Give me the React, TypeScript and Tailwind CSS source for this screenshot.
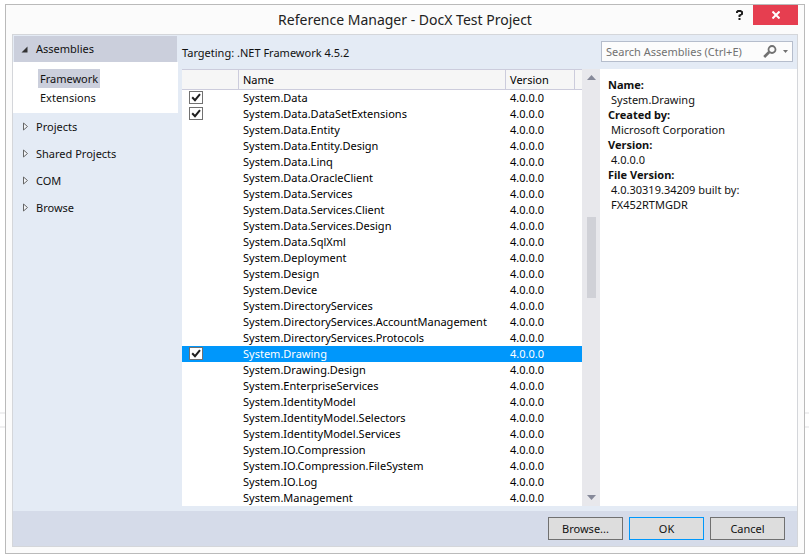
import { useState } from "react";

const assemblies = [
  "System.Data",
  "System.Data.DataSetExtensions",
  "System.Data.Entity",
  "System.Data.Entity.Design",
  "System.Data.Linq",
  "System.Data.OracleClient",
  "System.Data.Services",
  "System.Data.Services.Client",
  "System.Data.Services.Design",
  "System.Data.SqlXml",
  "System.Deployment",
  "System.Design",
  "System.Device",
  "System.DirectoryServices",
  "System.DirectoryServices.AccountManagement",
  "System.DirectoryServices.Protocols",
  "System.Drawing",
  "System.Drawing.Design",
  "System.EnterpriseServices",
  "System.IdentityModel",
  "System.IdentityModel.Selectors",
  "System.IdentityModel.Services",
  "System.IO.Compression",
  "System.IO.Compression.FileSystem",
  "System.IO.Log",
  "System.Management",
];

const details = [
  ["Name:", "System.Drawing"],
  ["Created by:", "Microsoft Corporation"],
  ["Version:", "4.0.0.0"],
  ["File Version:", "4.0.30319.34209 built by: FX452RTMGDR"],
];

function TitleBar() {
  return (
    <header className="grid h-[29px] grid-cols-[1fr_auto_1fr] items-start">
      <span />
      <h1 className="text-[14px] leading-[29px] text-[#222]">Reference Manager - DocX Test Project</h1>
      <div className="flex justify-end">
        <button aria-label="Help" className="flex h-5 w-7 items-center justify-center">
          <svg width="7" height="10" viewBox="0 0 7 10" fill="none" stroke="#1e1e1e" strokeWidth="2">
            <path d="M1 3V2L2 1h2.5L6 2v2L3.5 5.5V7M2.5 9h2" />
          </svg>
        </button>
        <button aria-label="Close" className="flex h-5 w-[45px] items-center justify-center bg-[#e63e50]">
          <svg width="8" height="8" viewBox="0 0 8 8" stroke="#fff" strokeWidth="2">
            <path d="M.5.5l7 7M7.5.5l-7 7" />
          </svg>
        </button>
      </div>
    </header>
  );
}

function Sidebar() {
  return (
    <nav className="flex w-[169px] shrink-0 flex-col pt-px pr-1">
      <button className="mx-px flex h-[26px] items-center bg-[#cbcfdc] pl-[7px] text-left">
        <svg width="7" height="7" viewBox="0 0 7 7" className="mr-2">
          <path d="M6.5.5v6h-6z" fill="#333" />
        </svg>
        Assemblies
      </button>
      <div className="flex h-[51px] flex-col items-start bg-white pt-[7px] pl-[25px]">
        <button className="h-[19px] bg-[#cbcfdc] px-[2px]">Framework</button>
        <button className="h-[19px] px-[2px]">Extensions</button>
      </div>
      {["Projects", "Shared Projects", "COM", "Browse"].map((label) => (
        <button key={label} className="flex h-[27px] items-center pl-2.5 text-left">
          <svg width="5" height="9" viewBox="0 0 5 9" className="mr-2">
            <path d="M.5 1v7L4.5 4.5z" fill="#f4f6fa" stroke="#666" />
          </svg>
          {label}
        </button>
      ))}
    </nav>
  );
}

function ScrollBar() {
  return (
    <div className="flex w-[18px] shrink-0 flex-col items-center bg-[#e8e8ec]">
      <button aria-label="Scroll up" className="flex h-[17px] w-full items-center justify-center">
        <svg width="9" height="5" viewBox="0 0 9 5">
          <path d="M0 5l4.5-5L9 5z" fill="#868999" />
        </svg>
      </button>
      <div className="grow-[131]" />
      <div className="h-[81px] w-[9px] bg-[#d0d1d7]" />
      <div className="grow-[191]" />
      <button aria-label="Scroll down" className="flex h-[17px] w-full items-center justify-center">
        <svg width="9" height="5" viewBox="0 0 9 5">
          <path d="M0 0l4.5 5L9 0z" fill="#868999" />
        </svg>
      </button>
    </div>
  );
}

function AssemblyTable() {
  const [checked, setChecked] = useState<string[]>(["System.Data", "System.Data.DataSetExtensions", "System.Drawing"]);
  const toggle = (name: string) =>
    setChecked((all) => (all.includes(name) ? all.filter((n) => n !== name) : [...all, name]));

  return (
    <div className="min-w-0 grow bg-white">
      <table className="w-full table-fixed border-separate border-spacing-0 text-left text-black">
        <colgroup>
          <col className="w-[57px]" />
          <col />
          <col className="w-[69px]" />
          <col className="w-[7px]" />
        </colgroup>
        <thead>
          <tr className="h-[21px] bg-[#f6f6f6]">
            <th aria-label="Selected" className="border-y border-r border-[#ccccdc] p-0" />
            <th className="border-y border-r border-[#ccccdc] py-0 pr-0 pl-1 font-normal">Name</th>
            <th className="border-y border-r border-[#ccccdc] py-0 pr-0 pl-1 font-normal">Version</th>
            <td className="border-y border-[#ccccdc] p-0" />
          </tr>
        </thead>
        <tbody>
          {assemblies.map((name) => (
            <tr key={name} className={name === "System.Drawing" ? "h-4 bg-[#0097fb] text-white" : "h-4"}>
              <td className="px-0 pt-px pb-0 align-top">
                {checked.includes(name) && (
                  <label className="relative ml-[7px] block h-[13px] w-[14px]">
                    <input
                      type="checkbox"
                      checked
                      onChange={() => toggle(name)}
                      aria-label={name}
                      className="block h-[13px] w-[14px] appearance-none border border-[#717171] bg-white"
                    />
                    <svg width="14" height="13" viewBox="0 0 14 13" className="pointer-events-none absolute inset-0">
                      <path d="M3.2 6.2L6 9.2l5-6" fill="none" stroke="#1e1e1e" strokeWidth="2" />
                    </svg>
                  </label>
                )}
              </td>
              <td className="py-0 pr-0 pl-1 whitespace-nowrap">{name}</td>
              <td className="py-0 pr-0 pl-1">4.0.0.0</td>
              <td className="p-0" />
            </tr>
          ))}
        </tbody>
      </table>
    </div>
  );
}

function DialogButton({ label, primary = false }: { label: string; primary?: boolean }) {
  return (
    <button
      className={
        primary
          ? "h-[23px] w-[75px] border border-[#0097fb] bg-[#dddddd]"
          : "h-[23px] w-[75px] border border-[#707070] bg-[#dddddd]"
      }
    >
      {label}
    </button>
  );
}

export default function App() {
  return (
    <div className="relative bg-white pt-1 pr-1 pb-1.5 pl-[5px] font-['Noto_Sans','Open_Sans',sans-serif] text-[11px] leading-4 text-[#111]">
      <div className="absolute inset-x-0 top-[412px] h-4 border-y-2 border-[#efeff0]" />
      <main className="relative border border-[#bababa] bg-[#fbfbfb] px-1.5 pb-1.5">
        <TitleBar />
        <div className="border border-[#d4d6da] bg-[#e4ebf5]">
          <div className="flex">
            <Sidebar />
            <div className="flex min-w-0 grow flex-col pb-[5px]">
              <div className="flex h-[34px] items-start justify-between pt-1.5 pr-1">
                <p className="leading-6">Targeting: .NET Framework 4.5.2</p>
                <label className="flex h-[21px] w-48 items-center border border-[#b5bdcc] bg-[#fcfcfc] pl-1">
                  <input
                    type="search"
                    aria-label="Search assemblies"
                    placeholder="Search Assemblies (Ctrl+E)"
                    className="w-0 grow bg-transparent outline-none placeholder:text-[#717171]"
                  />
                  <svg width="14" height="13" viewBox="0 0 14 13" fill="none" stroke="#717171" className="mr-1.5">
                    <circle cx="9" cy="4.5" r="3.5" strokeWidth="1.8" />
                    <path d="M6.2 7L1.2 12" strokeWidth="2.6" />
                  </svg>
                  <svg width="5" height="3" viewBox="0 0 5 3" className="mr-1">
                    <path d="M0 0h5L2.5 3z" fill="#717171" />
                  </svg>
                </label>
              </div>
              <div className="flex">
                <AssemblyTable />
                <ScrollBar />
                <dl className="w-[197px] shrink-0 bg-white pt-2 pr-10 pl-2 leading-[15px]">
                  {details.map(([term, value]) => (
                    <div key={term}>
                      <dt className="font-bold">{term}</dt>
                      <dd className="pl-[3px]">{value}</dd>
                    </div>
                  ))}
                </dl>
              </div>
            </div>
          </div>
          <footer className="flex h-[35px] items-center justify-end gap-1.5 bg-[#d5dbe9] px-3">
            <DialogButton label="Browse..." />
            <DialogButton label="OK" primary />
            <DialogButton label="Cancel" />
          </footer>
        </div>
      </main>
    </div>
  );
}
